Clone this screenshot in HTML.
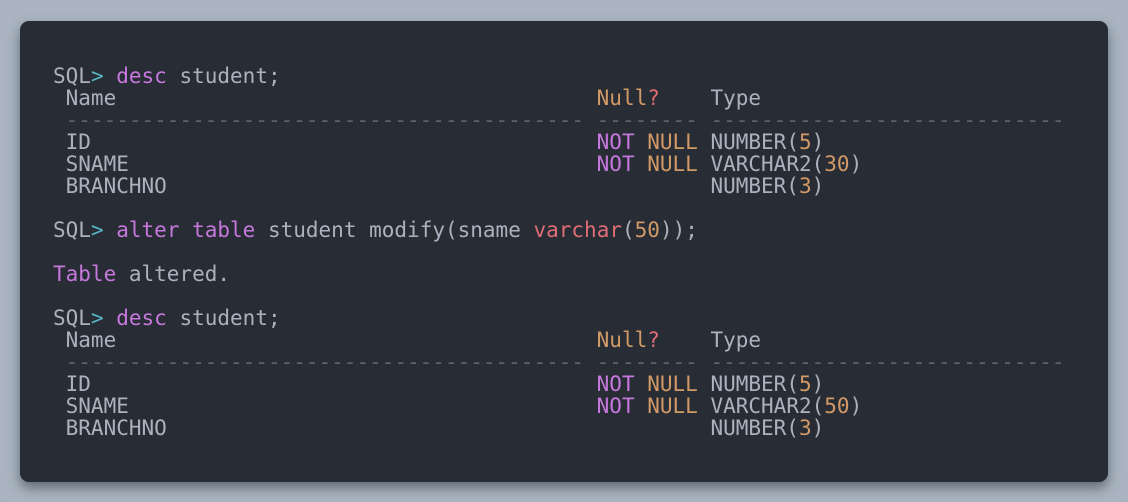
<!DOCTYPE html>
<html><head><meta charset="utf-8"><style>
html,body{margin:0;padding:0;}
body{width:1128px;height:502px;background:#aab5c1;position:relative;overflow:hidden;}
.card{position:absolute;left:20px;top:21px;width:1088px;height:461px;background:#282c34;border-radius:9px;box-shadow:0 6px 12px rgba(40,45,55,0.55);}
pre{position:absolute;left:33px;top:44px;margin:0;font-family:"DejaVu Sans Mono","Liberation Mono",monospace;font-size:21px;line-height:22px;color:#abb2bf;}
.p{color:#c678dd}.o{color:#d19a66}.r{color:#e06c75}.c{color:#56b6c2}.d{color:#5c6370}
</style></head><body><div class="card"><pre>SQL<span class="c">&gt;</span> <span class="p">desc</span> student;
 Name                                      <span class="o">Null</span><span class="r">?</span>    Type
 <span class="d">----------------------------------------- -------- ----------------------------</span>
 ID                                        <span class="p">NOT</span> <span class="o">NULL</span> NUMBER(<span class="o">5</span>)
 SNAME                                     <span class="p">NOT</span> <span class="o">NULL</span> VARCHAR2(<span class="o">30</span>)
 BRANCHNO                                           NUMBER(<span class="o">3</span>)

SQL<span class="c">&gt;</span> <span class="p">alter table</span> student modify(sname <span class="r">varchar</span>(<span class="o">50</span>));

<span class="p">Table</span> altered.

SQL<span class="c">&gt;</span> <span class="p">desc</span> student;
 Name                                      <span class="o">Null</span><span class="r">?</span>    Type
 <span class="d">----------------------------------------- -------- ----------------------------</span>
 ID                                        <span class="p">NOT</span> <span class="o">NULL</span> NUMBER(<span class="o">5</span>)
 SNAME                                     <span class="p">NOT</span> <span class="o">NULL</span> VARCHAR2(<span class="o">50</span>)
 BRANCHNO                                           NUMBER(<span class="o">3</span>)
</pre></div></body></html>
